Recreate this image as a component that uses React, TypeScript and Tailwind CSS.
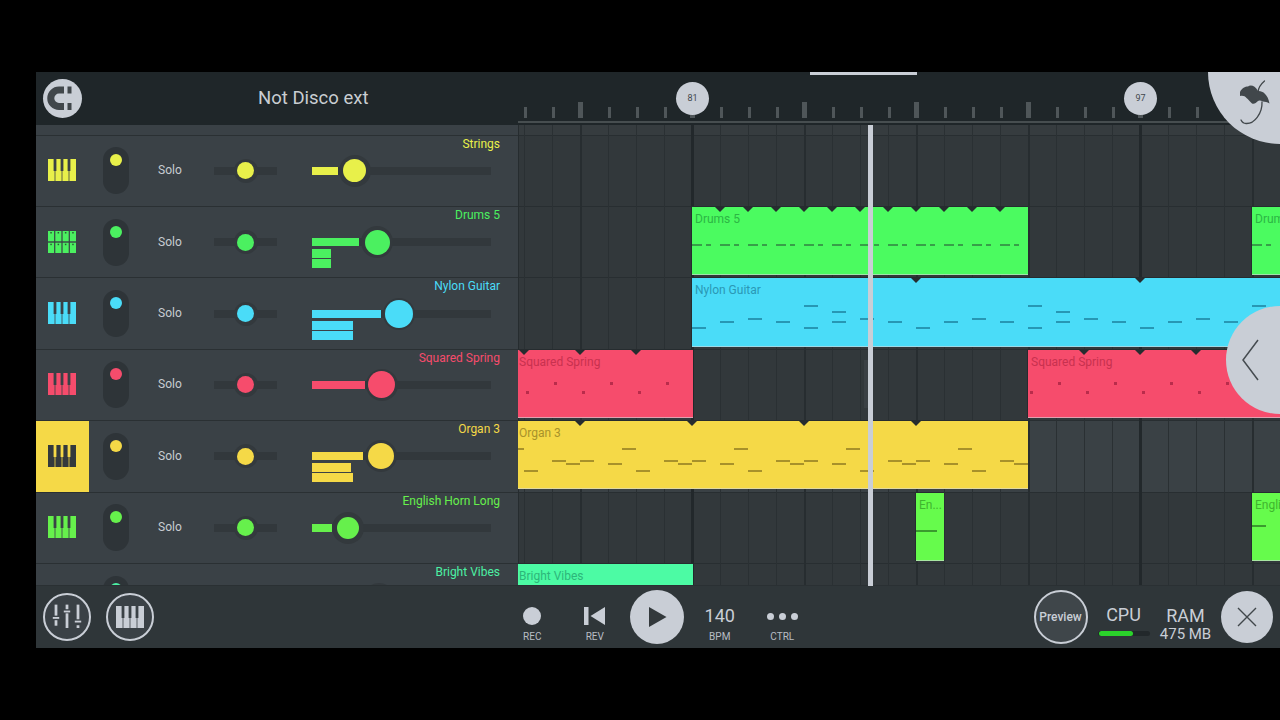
const grid = Array.from({ length: 28 }, (_, k) => k);

function range(from: number, to: number, step: number) {
  const out: number[] = [];
  for (let x = from; x < to; x += step) out.push(x);
  return out;
}

const drumNotes = (from: number, to: number) =>
  range(from, to, 28).flatMap((x) => [
    [x, 244, 10, 2],
    [x + 14, 244, 5, 2],
  ]);

const nylonLoop = [
  [0, 327],
  [28, 321],
  [56, 318],
  [84, 321],
  [112, 327],
  [112, 305],
  [140, 311],
  [140, 321],
  [168, 318],
  [196, 321],
];
const nylonNotes = [692, 916, 1140].flatMap((s) =>
  nylonLoop.map(([x, y]) => [s + x, y, 14, 2]),
);

const organLoop = [
  [0, 470],
  [28, 460],
  [42, 463],
  [56, 460],
  [84, 463],
  [98, 448],
];
const organNotes = [
  [518, 448, 6, 2],
  ...[524, 636, 748, 860, 972].flatMap((s) =>
    organLoop.map(([x, y]) => [s + x, y, 14, 2]),
  ),
];

const squaredNotes = (from: number, to: number) =>
  range(from, to, 28).map((x, i) => [x, i % 2 === 0 ? 391 : 382, 3, 3]);

const clips = [
  { name: "Drums 5", x: 692, w: 336, y: 207, h: 68, bg: "#4bfb60", fg: "#2cb644", note: "#379f49", pad: 3, notes: drumNotes(692, 1028), notches: range(720, 1001, 28) },
  { name: "Drums 5", x: 1252, w: 28, y: 207, h: 68, bg: "#4bfb60", fg: "#2cb644", note: "#379f49", pad: 3, notes: drumNotes(1252, 1280), notches: [] },
  { name: "Nylon Guitar", x: 692, w: 588, y: 278, h: 69, bg: "#4adcf8", fg: "#2a98b5", note: "#2797b4", pad: 3, notes: nylonNotes, notches: [916, 1140] },
  { name: "Squared Spring", x: 518, w: 175, y: 350, h: 68, bg: "#f64c6c", fg: "#c8314f", note: "#b92c4b", pad: 1, notes: squaredNotes(526, 690), notches: [524, 580, 636] },
  { name: "Squared Spring", x: 1028, w: 252, y: 350, h: 68, bg: "#f64c6c", fg: "#c8314f", note: "#b92c4b", pad: 3, notes: squaredNotes(1030, 1280), notches: [1084, 1140, 1196] },
  { name: "Organ 3", x: 518, w: 510, y: 421, h: 68, bg: "#f5d947", fg: "#a8922a", note: "#a8912a", pad: 1, notes: organNotes, notches: [580, 692, 804, 916] },
  { name: "En...", x: 916, w: 28, y: 493, h: 68, bg: "#66fb4c", fg: "#3fb52e", note: "#3a9a2e", pad: 3, notes: [[916, 530, 21, 2]], notches: [] },
  { name: "English Horn Long", x: 1252, w: 28, y: 493, h: 68, bg: "#66fb4c", fg: "#3fb52e", note: "#3a9a2e", pad: 3, notes: [[1252, 525, 14, 2]], notches: [] },
  { name: "Bright Vibes", x: 518, w: 175, y: 564, h: 22, bg: "#4cfba4", fg: "#2cb67a", note: "#2cb67a", pad: 1, notes: [], notches: [] },
];

const tracks = [
  { name: "Strings", color: "#e8f04a", icon: "piano", fill: 26, knob: 42.5, size: 23, stack: [] },
  { name: "Drums 5", color: "#4bf060", icon: "pads", fill: 47, knob: 65, size: 25, stack: [[19, 9], [19, 9]] },
  { name: "Nylon Guitar", color: "#4adcf8", icon: "piano", fill: 69, knob: 87, size: 28, stack: [[41, 9], [41, 9]] },
  { name: "Squared Spring", color: "#f64c6c", icon: "piano", fill: 53, knob: 69.5, size: 27, stack: [] },
  { name: "Organ 3", color: "#f5d947", icon: "piano", fill: 51, knob: 68.5, size: 26, stack: [[39, 9], [41, 9]], selected: true },
  { name: "English Horn Long", color: "#66f04c", icon: "piano", fill: 20, knob: 36, size: 22, stack: [] },
  { name: "Bright Vibes", color: "#4cf0a4", icon: "piano", fill: 50, knob: 67, size: 25, stack: [], cut: true },
];

function Piano({ color, className }: { color: string; className?: string }) {
  return (
    <svg viewBox="0 0 28 22" className={className} fill={color}>
      <path d="M0 0H5.6V12H6.6V22H0Z" />
      <path d="M8.4 0H12.6V12H13.6V22H7.4V12H8.4Z" />
      <path d="M15.4 0H19.6V12H20.6V22H14.4V12H15.4Z" />
      <path d="M22.4 0H28V22H21.4V12H22.4Z" />
    </svg>
  );
}

function Pads({ color }: { color: string }) {
  return (
    <svg viewBox="0 0 28 22" className="w-7 h-[22px] -mt-[1px] -ml-[1px]">
      {[0, 7.3, 14.6, 21.9].map((x) =>
        [0, 11.7].map((y) => (
          <g key={`${x}-${y}`}>
            <rect x={x} y={y} width="6.1" height="10.3" fill={color} />
            <rect x={x + 2.3} y={y + 1} width="1.5" height="1.5" fill="#2a5c35" />
          </g>
        )),
      )}
    </svg>
  );
}

function Magnet() {
  return (
    <svg viewBox="0 0 39 39" className="w-[39px] h-[39px]" fill="#41474b">
      <path d="M21 7.5h-5a11.5 11.5 0 0 0 0 23.5h5v-7h-5a4.6 4.6 0 0 1 0-9.4h5z" />
      <rect x="24.5" y="7.5" width="4" height="7" />
      <rect x="24.5" y="24" width="4" height="7" />
    </svg>
  );
}

function Fruit() {
  return (
    <svg viewBox="0 0 72 72" className="w-[72px] h-[72px]">
      <path
        d="M32 20C34 16 37 14.5 40 14.5C42 12.5 47 13 50 19C54 18.5 60 22 61.5 31.5C59 30 57 29.8 55 29.5C53 28.5 51 28 50 29C48 31 46 32.5 44 31.5C42 29.5 40 27 38.5 26C37 24 35 23.5 32 24Z"
        fill="#41474b"
      />
      <path
        d="M56.5 9C53 12 50.5 15 50 20M54 30C54.5 41 46.5 52 38 51.5C36 51.5 34 50 33 48"
        fill="none"
        stroke="#41474b"
        strokeWidth="1.3"
        strokeLinecap="round"
      />
    </svg>
  );
}

function Mixer() {
  return (
    <svg viewBox="0 0 48 48" className="w-11 h-11" fill="#c9ced6">
      <rect x="10.5" y="10.5" width="3" height="12" />
      <rect x="8.5" y="24" width="7" height="2" />
      <rect x="10.5" y="27.5" width="3" height="6" />
      <rect x="22.5" y="10.5" width="3" height="5" />
      <rect x="20.5" y="17" width="7" height="2" />
      <rect x="22.5" y="20" width="3" height="16" />
      <rect x="34.5" y="10.5" width="3" height="16" />
      <rect x="32.5" y="28" width="7" height="2" />
      <rect x="34.5" y="33" width="3" height="3" />
    </svg>
  );
}

function TrackRow({ track }: { track: (typeof tracks)[number] }) {
  const { color } = track;
  return (
    <div className="h-[71.4px] shrink-0 border-t border-[#2a3033] bg-[#3a4146]">
      <div className="h-0 pr-[18px] text-right text-xs leading-[14px]" style={{ color }}>
        <span className="relative top-[1px]">{track.name}</span>
      </div>
      <div className="h-full flex items-center">
        <div
          className="w-[53px] h-full flex items-center justify-center"
          style={{ backgroundColor: track.selected ? color : undefined }}
        >
          {track.icon === "pads" ? (
            <Pads color={color} />
          ) : (
            <Piano color={track.selected ? "#33393c" : color} className="w-7 h-[22px] -mt-[1px] -ml-[1px]" />
          )}
        </div>
        <div className="ml-[14px] w-[26px] h-[47px] rounded-full bg-[#2e3438] flex justify-center pt-[7px]">
          <div className="w-3 h-3 rounded-full" style={{ backgroundColor: color }} />
        </div>
        <div className="ml-[29px] w-[24px] -mt-[1px] text-xs text-[#c8cdd2]">{track.cut ? "" : "Solo"}</div>
        <div className="ml-[32px] w-[63px] h-2 bg-[#32383c] relative">
          <div className="absolute left-[19.5px] top-[-8px] w-6 h-6 rounded-full bg-[#33393d] flex items-center justify-center">
            <div className="w-[17px] h-[17px] rounded-full" style={{ backgroundColor: color }} />
          </div>
        </div>
        <div className="ml-[35px] w-[179px] h-2 bg-[#32383c] relative">
          <div className="absolute left-0 top-0 h-2" style={{ width: track.fill, backgroundColor: color }} />
          <div className="absolute left-0 top-[11px] flex flex-col gap-[1px]">
            {track.stack.map(([w, h], i) => (
              <div key={i} style={{ width: w, height: h, backgroundColor: color }} />
            ))}
          </div>
          <div
            className="absolute top-[-12px] w-8 h-8 -ml-4 rounded-full bg-[#33393d] flex items-center justify-center"
            style={{ left: track.knob }}
          >
            <div
              className="rounded-full shrink-0"
              style={{ width: track.size, height: track.size, backgroundColor: color }}
            />
          </div>
        </div>
      </div>
    </div>
  );
}

function Clip({ clip }: { clip: (typeof clips)[number] }) {
  return (
    <div
      className="absolute overflow-hidden border-l border-t border-[#262c2f]"
      style={{
        left: clip.x - 518 - 1,
        top: clip.y - 125 - 1,
        width: clip.w + 1,
        height: clip.h + 1,
        backgroundColor: clip.bg,
      }}
    >
      <div
        className="text-xs leading-[14px] whitespace-nowrap pt-[5px]"
        style={{ color: clip.fg, paddingLeft: clip.pad }}
      >
        {clip.name}
      </div>
      {clip.notes.map(([x, y, w, h], i) => (
        <div
          key={i}
          className="absolute"
          style={{ left: x - clip.x, top: y - clip.y, width: w, height: h, backgroundColor: clip.note }}
        />
      ))}
      {clip.notches.map((x) => (
        <div
          key={x}
          className="absolute top-0 w-0 h-0 -ml-[5px] border-x-[5px] border-t-[5px] border-x-transparent border-t-[#262c2f]"
          style={{ left: x - clip.x }}
        />
      ))}
      <div className="absolute left-0 right-0 bottom-0 h-[1px] bg-[#d5d9dc]/60" />
    </div>
  );
}

function Marker({ label, left }: { label: string; left: string }) {
  return (
    <div className={`absolute top-[10px] w-[33px] h-[33px] rounded-full bg-[#c9ced6] flex items-center justify-center text-[9px] text-[#41474b] ${left}`}>
      {label}
    </div>
  );
}

function Transport({ label, children }: { label: string; children: React.ReactNode }) {
  return (
    <div className="w-[62.5px] h-full flex flex-col items-center pt-[20px]">
      <div className="h-5 flex items-center justify-center text-lg leading-5 text-[#c9ced6]">{children}</div>
      <div className="mt-[5px] text-[10px] leading-3 text-[#b8bdc4]">{label}</div>
    </div>
  );
}

export default function App() {
  return (
    <div className="w-[1280px] h-[720px] bg-black overflow-hidden pt-[72px] pl-[36px] font-[family-name:Roboto,sans-serif]">
      <div className="relative w-[1244px] h-[576px] overflow-hidden flex flex-col bg-[#2f3639]">
        {/* header */}
        <div className="h-[53px] shrink-0 flex bg-[#1f2629]">
          <div className="w-[482px] shrink-0 flex items-center">
            <div className="ml-[7px] w-[39px] h-[39px] rounded-full bg-[#c9ced6] -mt-[1px]">
              <Magnet />
            </div>
            <div className="ml-[176px] text-[18.5px] text-[#c9ced2]">Not Disco ext</div>
          </div>
          <div className="flex-1 min-w-0 overflow-hidden">
            <div className="h-[46px] flex items-end pl-[6px]">
              {grid.map((k) => (
                <div key={k} className="w-7 shrink-0">
                  {k % 4 === 2 ? (
                    <div className="w-[5px] h-4 -ml-[2px] bg-[#4f5659]" />
                  ) : (
                    <div className="w-[3px] h-[11px] bg-[#4f5659]" />
                  )}
                </div>
              ))}
            </div>
            <div className="mt-[3px] h-[2px] bg-[#474e50]" />
          </div>
        </div>

        {/* tracks and timeline */}
        <div className="h-[460px] shrink-0 flex">
          <div className="w-[482px] shrink-0 overflow-hidden flex flex-col">
            <div className="h-[9.6px] shrink-0 bg-[#3a4146]" />
            {tracks.map((t) => (
              <TrackRow key={t.name} track={t} />
            ))}
          </div>
          <div className="relative flex-1 min-w-0 overflow-hidden bg-[#32383b]">
            <div className="h-[9.6px] bg-[#363c3f]" />
            <div className="h-[71.4px] border-t border-[#282e31]" />
            <div className="h-[71.4px] border-t border-[#282e31]" />
            <div className="h-[71.4px] border-t border-[#282e31]" />
            <div className="h-[71.4px] border-t border-[#282e31]" />
            <div className="h-[71.4px] border-t border-[#282e31] bg-[#3a4145]" />
            <div className="h-[71.4px] border-t border-[#282e31]" />
            <div className="h-[71.4px] border-t border-[#282e31]" />
            <div className="absolute inset-0 flex pl-[5px] border-l border-[#262c2f]">
              {grid.map((k) => (
                <div
                  key={k}
                  className={`w-7 h-full shrink-0 ${
                    k === 6 || k === 22
                      ? "border-l-[3px] -ml-[1px] mr-[1px] border-[#22282b]"
                      : k % 4 === 2
                        ? "border-l-2 border-[#272d30]"
                        : "border-l border-[#2a3033]"
                  }`}
                />
              ))}
            </div>
            <div className="absolute left-[346px] top-[235px] w-[5px] h-12 bg-[#3a4044]" />
            {clips.map((c) => (
              <Clip key={`${c.name}-${c.x}`} clip={c} />
            ))}
          </div>
        </div>

        {/* bottom bar */}
        <div className="flex-1 flex items-center pl-[7px] pr-[7px] border-t border-[#2a3033] bg-[#2f3639]">
          <div className="w-12 h-12 rounded-full border-2 border-[#c9ced6] bg-[#3a4146] flex items-center justify-center">
            <Mixer />
          </div>
          <div className="ml-[14.5px] w-12 h-12 rounded-full border-2 border-[#c9ced6] bg-[#3a4146] flex items-center justify-center">
            <Piano color="#c9ced6" className="w-7 h-[22px]" />
          </div>
          <div className="ml-[347.5px] h-full flex items-center">
            <Transport label="REC">
              <div className="w-[18px] h-[18px] rounded-full bg-[#c9ced6]" />
            </Transport>
            <Transport label="REV">
              <svg viewBox="0 0 22 18" className="w-[22px] h-[18px]" fill="#c9ced6">
                <rect x="0" y="0" width="4.5" height="18" />
                <path d="M21 0V18L6.5 9Z" />
              </svg>
            </Transport>
            <div className="w-[62.5px] flex justify-center">
              <div className="w-[54px] h-[54px] rounded-full bg-[#c9ced6] flex items-center justify-center shrink-0">
                <svg viewBox="0 0 18 20" className="w-[18px] h-5 ml-[2px]" fill="#33393c">
                  <path d="M0 0L17.5 10L0 20Z" />
                </svg>
              </div>
            </div>
            <Transport label="BPM">140</Transport>
            <Transport label="CTRL">
              <div className="flex gap-[5px]">
                <div className="w-[7px] h-[7px] rounded-full bg-[#c9ced6]" />
                <div className="w-[7px] h-[7px] rounded-full bg-[#c9ced6]" />
                <div className="w-[7px] h-[7px] rounded-full bg-[#c9ced6]" />
              </div>
            </Transport>
          </div>
          <div className="ml-auto w-[54px] h-[54px] rounded-full border-2 border-[#c9ced6] bg-[#3f464a] flex items-center justify-center text-xs font-medium text-[#c9ced6]">
            Preview
          </div>
          <div className="ml-[10px] w-[52px] pt-[7px] flex flex-col items-center">
            <div className="text-lg leading-5 text-[#c9ced6]">CPU</div>
            <div className="mt-[6px] w-[52px] h-[5px] rounded-sm bg-[#22282b]">
              <div className="ml-[1px] w-[34px] h-[5px] rounded-sm bg-[#2bd32b]" />
            </div>
          </div>
          <div className="ml-[8px] w-[56px] pt-[14px] flex flex-col items-center text-[#c9ced6]">
            <div className="text-lg leading-5">RAM</div>
            <div className="text-[15px] leading-4">475 MB</div>
          </div>
          <div className="ml-[7.5px] w-[52px] h-[52px] rounded-full bg-[#c9ced6] flex items-center justify-center">
            <svg viewBox="0 0 20 20" className="w-5 h-5" fill="none" stroke="#41474b" strokeWidth="1.4">
              <path d="M1 1L19 19M19 1L1 19" />
            </svg>
          </div>
        </div>

        {/* things on top */}
        <div className="absolute left-[832px] top-[53px] w-[5px] h-[461px] bg-[#c9ced6]" />
        <div className="absolute left-[774px] top-0 w-[107px] h-[3px] bg-[#c9ced6]" />
        <Marker label="81" left="left-[640px]" />
        <Marker label="97" left="left-[1088px]" />
        <div className="absolute right-0 top-0 w-[72px] h-[72px] rounded-bl-full bg-[#c9ced6]">
          <Fruit />
        </div>
        <div className="absolute right-0 top-[234px] w-[54px] h-[108px] rounded-l-full bg-[#c9ced6] flex items-center pl-[16px]">
          <svg viewBox="0 0 18 42" className="w-[18px] h-[42px]" fill="none" stroke="#454b50" strokeWidth="1.5">
            <path d="M16 1L1 21L16 41" />
          </svg>
        </div>
      </div>
    </div>
  );
}
